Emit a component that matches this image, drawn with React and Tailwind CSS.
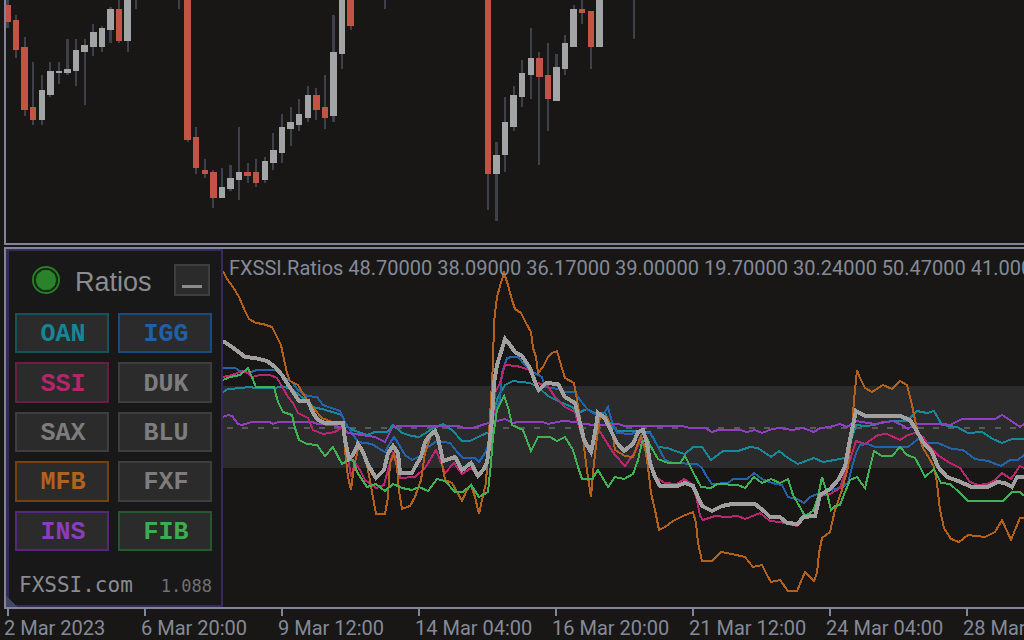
import React, { useState } from 'react';

// bodyX, bodyW, bodyTop, bodyBottom, wickX, wickW, wickTop, wickBottom, down
const CANDLES = [
  [6, 5, 5, 22, 6, 3, 0, 28, 1],
  [13, 6, 20, 50, 15, 2, 15, 58, 1],
  [21, 7, 47, 110, 24, 2, 37, 116, 1],
  [30, 6, 107, 120, 32, 2, 62, 125, 1],
  [39, 6, 90, 120, 41, 2, 75, 125, 0],
  [47, 7, 71, 95, 49, 2, 62, 97, 0],
  [56, 6, 71, 73, 58, 2, 62, 84, 0],
  [64, 7, 69, 73, 66, 3, 39, 75, 0],
  [73, 6, 50, 71, 75, 2, 39, 86, 0],
  [81, 7, 45, 52, 84, 2, 39, 105, 0],
  [90, 7, 32, 47, 92, 2, 24, 56, 0],
  [99, 6, 28, 47, 101, 2, 26, 52, 0],
  [107, 7, 9, 30, 109, 3, 7, 43, 0],
  [116, 6, 9, 41, 118, 2, 0, 43, 1],
  [124, 7, 0, 41, 127, 2, 0, 52, 0],
  [133, 6, 0, 0, 135, 2, 0, 9, 0],
  [176, 6, 0, 0, 178, 2, 0, 9, 0],
  [184, 7, 0, 140, 187, 2, 0, 142, 1],
  [193, 6, 137, 168, 195, 2, 127, 174, 1],
  [202, 6, 170, 174, 204, 2, 159, 178, 1],
  [210, 7, 172, 198, 212, 2, 170, 208, 1],
  [219, 6, 187, 198, 221, 2, 168, 198, 0],
  [227, 7, 178, 189, 229, 3, 165, 191, 0],
  [236, 6, 172, 180, 238, 2, 127, 200, 0],
  [244, 7, 172, 176, 247, 2, 163, 183, 1],
  [253, 6, 172, 183, 255, 2, 159, 187, 1],
  [262, 6, 161, 180, 264, 2, 157, 183, 0],
  [270, 7, 150, 163, 272, 2, 133, 170, 0],
  [279, 6, 127, 153, 281, 2, 114, 163, 0],
  [287, 7, 122, 129, 290, 2, 107, 146, 0],
  [296, 6, 114, 125, 298, 2, 99, 131, 0],
  [305, 6, 95, 118, 307, 2, 86, 122, 0],
  [313, 7, 95, 110, 315, 2, 88, 120, 1],
  [322, 6, 107, 118, 324, 2, 75, 129, 1],
  [330, 7, 52, 116, 332, 3, 15, 122, 0],
  [339, 6, 0, 54, 341, 2, 0, 69, 0],
  [347, 7, 0, 26, 350, 2, 0, 30, 1],
  [382, 6, 0, 0, 384, 2, 0, 9, 0],
  [485, 6, 0, 174, 487, 2, 0, 210, 1],
  [493, 7, 155, 174, 495, 3, 142, 221, 0],
  [502, 6, 122, 155, 504, 2, 97, 172, 0],
  [510, 7, 95, 127, 513, 2, 86, 131, 0],
  [519, 6, 73, 97, 521, 2, 60, 107, 0],
  [528, 6, 58, 75, 530, 2, 28, 99, 0],
  [536, 7, 58, 77, 538, 2, 52, 165, 1],
  [545, 6, 75, 99, 547, 2, 43, 131, 1],
  [553, 7, 67, 101, 555, 3, 54, 101, 0],
  [562, 6, 43, 69, 564, 2, 35, 75, 0],
  [570, 7, 9, 47, 573, 2, 5, 47, 0],
  [579, 6, 9, 13, 581, 2, 0, 24, 1],
  [588, 6, 11, 47, 590, 2, 11, 69, 1],
  [596, 7, 0, 47, 598, 2, 0, 47, 0],
  [631, 6, 0, 0, 633, 2, 0, 39, 0],
];

const LINES = [
  {
    id: 'OAN',
    color: '#168a9c',
    points:
      '223,392 228,389 242,388 248,387 257,388 270,388 285,387 293,390 303,398 312,407 322,409 342,415 347,427 358,432 367,435 375,432 387,432 393,425 402,433 412,436 419,437 424,434 432,429 443,424 452,430 462,441 470,441 478,437 489,432 492,417 498,397 505,385 513,381 530,383 538,387 548,396 560,402 572,407 578,413 587,409 595,413 605,413 612,427 617,431 630,431 640,431 650,432 658,447 668,448 675,451 685,454 693,447 702,447 711,460 723,451 738,451 750,447 758,448 771,457 779,451 788,458 798,464 814,458 823,462 840,459 847,457 851,440 856,425 865,426 875,425 883,422 895,421 907,421 917,411 927,413 934,411 942,425 957,427 968,433 982,432 993,439 1002,443 1012,439 1024,439',
  },
  {
    id: 'IGG',
    color: '#2263ac',
    points:
      '223,368 235,368 240,371 248,373 257,370 277,370 285,378 292,382 298,390 307,396 317,397 323,405 340,411 345,422 352,433 358,442 372,444 378,448 385,452 390,443 394,437 398,443 405,455 412,460 420,456 428,447 437,441 450,443 458,453 463,458 475,458 479,462 485,453 489,443 493,417 500,400 502,373 507,358 512,357 518,357 525,365 533,372 542,377 545,387 558,389 565,392 575,392 580,400 588,410 595,414 603,415 608,407 612,422 617,433 630,434 640,432 650,433 657,445 665,460 673,463 697,464 702,468 707,477 712,484 728,483 733,479 747,479 754,473 762,479 772,483 782,485 788,497 797,499 804,503 810,497 817,494 828,491 842,487 848,483 852,467 856,453 860,445 868,444 875,447 908,447 918,439 928,443 938,443 952,449 963,450 975,459 988,461 1001,466 1010,460 1018,460 1024,455',
  },
  {
    id: 'INS',
    color: '#8f3fc1',
    points:
      '223,417 228,415 232,416 238,424 242,425 252,422 270,422 273,424 278,422 312,422 318,424 332,425 343,428 348,433 362,435 375,437 385,442 392,428 397,426 458,426 465,428 473,428 485,424 505,419 513,423 518,422 543,422 548,424 562,421 577,422 582,424 597,425 618,424 625,426 682,426 690,428 705,428 712,432 718,430 740,430 747,432 755,430 762,433 772,429 780,428 792,430 803,428 814,432 820,428 830,427 840,424 847,427 856,421 868,423 875,424 893,421 902,425 908,429 915,424 943,424 950,425 962,419 995,419 1002,415 1010,420 1020,427 1024,424',
  },
  {
    id: 'SSI',
    color: '#bb276e',
    points:
      '223,377 232,375 242,371 248,373 252,377 260,375 270,375 277,378 283,388 288,397 293,403 298,413 308,418 313,430 323,434 335,432 343,427 346,443 349,463 351,477 355,463 360,470 365,480 376,488 384,485 388,470 393,453 397,460 400,478 415,477 425,468 436,450 440,460 445,473 454,463 462,474 471,468 479,476 487,463 492,433 495,393 500,383 505,365 517,366 530,370 537,383 547,385 555,397 565,407 575,412 582,437 591,453 595,437 599,430 607,443 615,455 625,466 633,455 641,440 647,453 652,470 657,478 665,483 677,484 684,479 693,485 697,500 700,516 703,520 715,516 727,517 738,516 745,519 760,513 770,521 780,522 788,524 797,526 803,517 815,517 820,496 830,494 840,488 845,473 850,460 856,441 865,444 878,435 887,434 900,440 908,435 915,433 923,437 930,447 938,455 948,462 960,468 970,482 978,485 987,484 995,480 1002,473 1011,479 1020,466 1024,468',
  },
  {
    id: 'MFB',
    color: '#b4611b',
    points:
      '223,271 227,279 233,287 239,297 245,311 249,319 256,323 263,324 272,327 277,337 281,345 283,355 287,373 290,381 298,385 302,392 307,400 314,409 322,418 332,422 343,423 345,450 348,477 351,490 354,467 358,449 363,450 368,470 372,492 376,514 385,514 388,497 390,463 394,454 397,467 399,491 402,509 410,506 415,497 421,480 425,453 432,432 437,433 441,457 445,480 452,483 457,492 462,501 467,490 471,485 475,497 479,514 482,500 486,483 488,450 491,400 493,363 494,322 497,297 500,286 504,273 508,285 512,300 515,309 521,313 526,323 531,332 533,348 536,357 538,373 543,367 548,357 552,353 557,351 561,365 565,378 574,383 577,400 582,430 586,463 588,477 591,497 594,463 597,437 600,417 607,417 612,430 615,450 625,456 633,457 638,443 641,436 645,447 648,467 651,493 655,510 659,530 665,527 673,521 683,516 693,512 696,523 698,543 702,561 712,561 721,552 732,554 745,557 753,567 762,565 767,575 771,582 780,580 788,591 797,591 805,572 814,581 817,573 819,553 822,538 830,532 835,510 842,490 848,467 852,430 854,400 857,370 860,378 865,388 872,392 883,385 892,389 900,381 907,385 912,405 915,420 918,433 923,448 929,458 934,467 937,483 940,510 944,528 951,539 959,542 968,535 985,537 995,532 1002,520 1011,540 1015,530 1020,518 1024,518',
  },
  {
    id: 'FIB',
    color: '#3fb253',
    points:
      '223,380 230,377 240,375 248,368 251,375 256,387 274,387 278,402 283,412 292,415 295,428 299,440 307,444 317,445 325,456 333,447 342,464 348,460 353,460 357,472 367,487 376,484 385,491 393,484 402,488 412,490 419,487 428,491 437,479 445,481 455,492 463,492 471,485 479,497 488,492 491,463 493,437 497,410 504,396 508,407 512,425 523,430 531,451 538,437 550,437 557,441 565,437 573,450 578,467 582,479 592,479 598,470 608,487 615,477 624,479 633,474 638,460 642,442 647,438 650,445 658,459 668,463 680,463 685,456 692,470 701,487 711,488 717,484 738,485 745,488 754,477 762,483 771,479 780,483 788,479 793,495 805,516 813,511 818,497 822,477 827,493 831,510 835,506 840,505 845,492 850,480 857,477 865,488 870,467 874,451 882,456 892,456 900,447 907,455 915,458 920,467 925,477 934,469 941,483 950,484 960,493 968,501 1003,501 1012,492 1020,492 1024,496',
  },
];

const AVERAGE =
  '223,341 232,347 240,353 245,357 255,358 267,361 275,367 282,375 287,383 293,392 299,401 308,401 313,413 318,420 325,423 343,423 345,440 349,459 353,455 358,444 363,452 368,465 376,478 384,470 388,453 393,446 398,453 400,473 412,473 415,467 421,457 425,442 430,435 435,431 438,438 443,461 455,457 462,470 471,463 478,476 483,470 487,463 489,447 492,420 494,383 497,365 501,352 505,339 510,345 515,352 522,356 530,368 535,382 539,390 546,383 558,384 565,397 575,403 580,423 584,440 591,452 595,433 598,413 605,418 612,433 617,443 624,451 633,444 638,432 643,430 647,443 650,463 655,477 660,486 677,486 685,483 693,486 698,497 702,506 712,511 722,506 732,504 755,504 765,512 770,517 780,517 787,523 798,524 803,517 815,516 820,495 830,489 838,480 845,467 848,450 852,430 856,411 865,416 900,416 910,420 915,428 923,442 932,452 938,467 947,477 958,481 972,487 988,487 997,482 1005,483 1012,487 1017,477 1024,477';

const BROKERS = [
  { name: 'OAN', className: 'border-[#13535f] text-[#178596]' },
  { name: 'IGG', className: 'border-[#194a80] text-[#2160a8]' },
  { name: 'SSI', className: 'border-[#6b1d44] text-[#b4266b]' },
  { name: 'DUK', className: 'border-[#3e3e3e] text-[#7d7d7f]' },
  { name: 'SAX', className: 'border-[#3e3e3e] text-[#7d7d7f]' },
  { name: 'BLU', className: 'border-[#3e3e3e] text-[#7d7d7f]' },
  { name: 'MFB', className: 'border-[#75410f] text-[#b4611b]' },
  { name: 'FXF', className: 'border-[#3e3e3e] text-[#7d7d7f]' },
  { name: 'INS', className: 'border-[#56277a] text-[#8a3dbb]' },
  { name: 'FIB', className: 'border-[#24592f] text-[#3dac51]' },
];

const DATES = [
  '2 Mar 2023',
  '6 Mar 20:00',
  '9 Mar 12:00',
  '14 Mar 04:00',
  '16 Mar 20:00',
  '21 Mar 12:00',
  '24 Mar 04:00',
  '28 Mar 20:00',
];

const PriceChart = () => (
  <svg viewBox="6 0 1018 243" className="block w-full h-auto" shapeRendering="crispEdges" aria-hidden="true">
    {CANDLES.map(([x, w, top, bottom, wx, ww, wTop, wBottom, down]) => (
      <g key={x}>
        <rect x={wx} y={wTop} width={ww} height={wBottom - wTop} fill="#3e414c" />
        <rect x={x} y={top} width={w} height={bottom - top} fill={down ? '#c35345' : '#a2a4a6'} />
      </g>
    ))}
  </svg>
);

const RatiosChart = () => (
  <svg viewBox="223 249 801 358" className="block w-full h-auto" shapeRendering="crispEdges" aria-hidden="true">
    <rect x="223" y="386" width="801" height="82" fill="#2b2b2b" />
    <line x1="227" y1="428" x2="1024" y2="428" stroke="#5a5a5a" strokeWidth="2" strokeDasharray="6 9.35" />
    <g fill="none" strokeWidth="2">
      {LINES.map((line) => (
        <polyline key={line.id} points={line.points} stroke={line.color} />
      ))}
    </g>
    <polyline points={AVERAGE} fill="none" stroke="#a0a0a0" strokeWidth="4" />
  </svg>
);

const RatiosPanel = ({ hidden, onToggle }) => (
  <aside className="relative flex w-[217px] shrink-0 flex-col border-2 border-l-3 border-[#37295a] bg-[#181818] pl-1.5 pr-[9px]">
    {/* Header */}
    <div className="flex h-[62px] items-start pt-[13px]">
      <svg viewBox="0 0 28 28" className="ml-[17px] mt-0.5 size-7 shrink-0" aria-hidden="true">
        <circle cx="14" cy="14" r="13" fill="#181818" stroke="#287d28" strokeWidth="2" />
        <circle cx="14" cy="14" r="10.5" fill="#2a822a" />
        <circle cx="14" cy="14" r="11" fill="none" stroke="#15300f" strokeWidth="2" strokeDasharray="5 2" />
      </svg>
      <h1 className="ml-[15px] font-['Liberation_Sans',sans-serif] text-[27px] leading-9 text-[#8c8c90]">Ratios</h1>
      <button
        type="button"
        aria-label="Minimize"
        className="ml-auto mr-0.5 flex h-8 w-9 items-end justify-center border-2 border-[#3e3e3e] bg-[#2b2b2b] pb-1.5"
      >
        <span className="h-[3px] w-5 bg-[#8e8b88]" />
      </button>
    </div>
    {/* Brokers */}
    <div className="grid h-[238px] grid-cols-2 grid-rows-5 gap-[9px]">
      {BROKERS.map(({ name, className }) => (
        <button
          key={name}
          type="button"
          aria-pressed={!hidden.includes(name)}
          onClick={() => onToggle(name)}
          className={`border-2 bg-[#2b2b2b] pl-0.5 pt-1 font-['Liberation_Mono',monospace] text-[25px] font-bold leading-8 ${className}`}
        >
          {name}
        </button>
      ))}
    </div>
    {/* Footer */}
    <div className="mt-5 flex items-baseline justify-between pl-1 font-['DejaVu_Sans_Mono',monospace] leading-7">
      <a href="#fxssi" className="text-[21px] text-[#8c8c90]">FXSSI.com</a>
      <span className="text-[17px] text-[#717171]">1.088</span>
    </div>
    <svg viewBox="0 0 11 11" className="absolute -bottom-0.5 -left-[3px] size-[11px]" shapeRendering="crispEdges" aria-hidden="true">
      <path d="M0 0L11 11H0z" fill="#414666" />
    </svg>
  </aside>
);

const App = () => {
  const [hidden, setHidden] = useState(['DUK', 'SAX', 'BLU', 'FXF']);

  const toggle = (name) =>
    setHidden((prev) => (prev.includes(name) ? prev.filter((n) => n !== name) : [...prev, name]));

  return (
    <main className="flex min-h-screen flex-col overflow-hidden bg-[#181715] font-[Roboto,sans-serif] text-xl text-[#858a99]">
      <section className="ml-1 border-b-2 border-l-2 border-[#80859a]">
        <PriceChart />
      </section>
      <section className="ml-1 mt-0.5 flex border-y-2 border-l-2 border-[#80859a]">
        <RatiosPanel hidden={hidden} onToggle={toggle} />
        <div className="relative min-w-0 flex-1 overflow-hidden">
          <RatiosChart />
          <p className="absolute left-1.5 top-[7px] whitespace-nowrap leading-6">
            FXSSI.Ratios 48.70000 38.09000 36.17000 39.00000 19.70000 30.24000 50.47000 41.00000
          </p>
        </div>
      </section>
      {/* Time axis */}
      <ol className="flex overflow-hidden pl-1">
        {DATES.map((date) => (
          <li key={date} className="w-[137px] shrink-0 whitespace-nowrap leading-6">
            <div className="ml-[3px] h-[7px] w-0.5 bg-[#80859a]" />
            {date}
          </li>
        ))}
      </ol>
    </main>
  );
};

export default App;
